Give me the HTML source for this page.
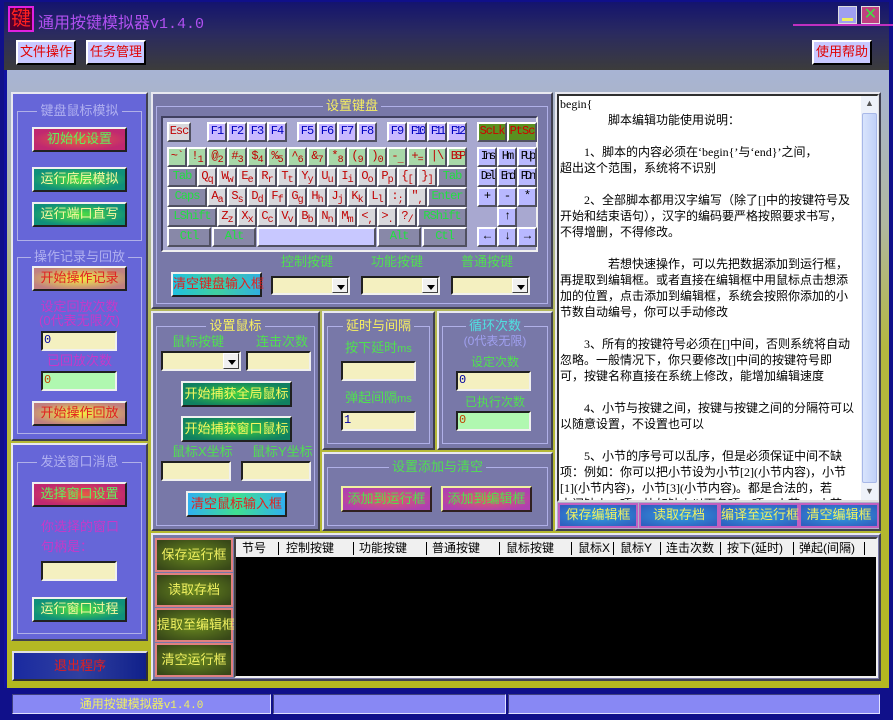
<!DOCTYPE html>
<html><head><meta charset="utf-8">
<style>
*{margin:0;padding:0;box-sizing:border-box}
body{width:893px;height:720px;overflow:hidden;background:#10108a;font-family:"Liberation Sans","Noto Sans CJK SC","WenQuanYi Zen Hei",sans-serif;font-size:13px;position:relative}
.a{position:absolute}
.c{text-align:center;white-space:nowrap}
.panel{position:absolute;border:2px solid;border-color:#e8e8f0 #404050 #404050 #e8e8f0}
.grp{position:absolute;border:1px solid #b0b0e8}
.lg{position:absolute;left:0;right:0;top:-9px;text-align:center;font-size:13px;line-height:16px}
.lg span{padding:0 3px}
.in{position:absolute;background:#f4f0c0;border:2px solid;border-color:#202020 #f0f0f0 #f0f0f0 #202020;font-size:12px;line-height:15px;padding-left:1px;font-family:"Liberation Mono",monospace}
.btn{position:absolute;border:2px solid;border-color:#f0f0f0 #202020 #202020 #f0f0f0;text-align:center;white-space:nowrap;font-size:13px}
.cb{position:absolute;background:#f4f0c0;border:2px solid;border-color:#202020 #f0f0f0 #f0f0f0 #202020}
.cb i{position:absolute;right:0;top:0;bottom:0;width:16px;background:#f0f0f0;border:1px solid;border-color:#fff #404040 #404040 #fff}
.cb i:after{content:"";position:absolute;left:4px;top:6px;border:4px solid transparent;border-top:5px solid #000;border-bottom:0}
.k{position:absolute;height:20px;border:2px solid;border-color:#fff #505060 #505060 #fff;font-family:"Liberation Mono",monospace;font-size:12px;line-height:15px;text-align:center;white-space:nowrap;overflow:hidden;letter-spacing:-1px}
.L{background:#d8d8dc;color:#c00000}
.N{background:#a8d8a8;color:#c00000}
.F{background:#c8b8ff;color:#0000c0}
.M{background:#8888a8;color:#20e040}
.P{background:#b8b8ff;color:#000}
.S{background:#5a9020;color:#d00000}
.lab{position:absolute;white-space:nowrap;font-size:13px;line-height:16px}
.g{color:#50e050}
.y{color:#f8f060}
sub{font-size:10px;vertical-align:-3px}
</style></head><body>
<div class="a" style="left:4px;top:2px;width:885px;height:68px;background:linear-gradient(#14146e,#2a2a60 45%,#3c3c3c)"></div>
<div class="a c" style="left:8px;top:6px;width:26px;height:26px;border:2px solid #e020e0;background:#500030;color:#ff2020;font-size:20px;line-height:22px">键</div>
<div class="a" style="left:38px;top:9px;color:#b050f0;font-size:16px;white-space:nowrap">通用按键模拟器<span style="font-family:'Liberation Mono',monospace;font-size:15px">v1.4.0</span></div>
<div class="a" style="left:793px;top:24px;width:100px;height:2px;background:#c030c0"></div>
<div class="a" style="left:838px;top:6px;width:19px;height:18px;background:#a0a0f0;border:1px solid #ddd"><div class="a" style="left:3px;top:11px;width:11px;height:3px;background:#f0f060"></div></div>
<div class="a c" style="left:861px;top:6px;width:19px;height:18px;background:#c04080;border:1px solid #ddd;color:#40e040;font-size:16px;line-height:15px">✕</div>
<div class="btn" style="left:16px;top:40px;width:60px;height:25px;background:#c8c8ff;color:#e00000;line-height:20px;border-color:#fff #000 #000 #fff">文件操作</div>
<div class="btn" style="left:86px;top:40px;width:60px;height:25px;background:#c8c8ff;color:#e00000;line-height:20px;border-color:#fff #000 #000 #fff">任务管理</div>
<div class="btn" style="left:812px;top:40px;width:60px;height:25px;background:#c8c8ff;color:#e00000;line-height:20px;border-color:#fff #000 #000 #fff">使用帮助</div>
<div class="a" style="left:4px;top:70px;width:885px;height:618px;background:linear-gradient(#a8b4d4 0%,#b0b8a0 25%,#b4b840 45%,#b4b820 100%);border-left:3px solid #1010a0"></div>
<div class="panel" style="left:11px;top:92px;width:137px;height:349px;background:#6666d8"></div>
<div class="grp" style="left:17px;top:111px;width:125px;height:130px"><div class="lg" style="color:#b0b0f0"><span style="background:#6666d8">键盘鼠标模拟</span></div></div>
<div class="btn" style="left:32px;top:127px;width:95px;height:25px;background:radial-gradient(ellipse at center,#e86040,#c02870 75%);color:#60f060;line-height:20px">初始化设置</div>
<div class="btn" style="left:32px;top:167px;width:95px;height:25px;background:radial-gradient(ellipse at center,#50e040,#10907a 75%);color:#f8f8a0;line-height:20px">运行底层模拟</div>
<div class="btn" style="left:32px;top:202px;width:95px;height:25px;background:radial-gradient(ellipse at center,#50e040,#10907a 75%);color:#f8f8a0;line-height:20px">运行端口直写</div>
<div class="grp" style="left:17px;top:257px;width:125px;height:177px"><div class="lg" style="color:#b0b0f0"><span style="background:#6666d8">操作记录与回放</span></div></div>
<div class="btn" style="left:32px;top:266px;width:95px;height:25px;background:radial-gradient(ellipse at center,#f8f040,#c08080 80%);color:#e02020;line-height:20px">开始操作记录</div>
<div class="lab c" style="left:17px;width:125px;top:299px;color:#c838c8">设定回放次数</div>
<div class="lab c" style="left:17px;width:125px;top:313px;color:#c838c8">(0代表无限次)</div>
<div class="in" style="left:41px;top:331px;width:76px;height:20px;color:#0000a0">0</div>
<div class="lab c" style="left:17px;width:125px;top:353px;color:#c838c8">已回放次数</div>
<div class="in" style="left:41px;top:371px;width:76px;height:20px;background:#b0f8b0;color:#c04000">0</div>
<div class="btn" style="left:32px;top:401px;width:95px;height:25px;background:radial-gradient(ellipse at center,#f8f040,#c08080 80%);color:#e02020;line-height:20px">开始操作回放</div>
<div class="panel" style="left:11px;top:443px;width:137px;height:198px;background:#6666d8"></div>
<div class="grp" style="left:17px;top:462px;width:125px;height:172px"><div class="lg" style="color:#b0b0f0"><span style="background:#6666d8">发送窗口消息</span></div></div>
<div class="btn" style="left:32px;top:482px;width:95px;height:25px;background:radial-gradient(ellipse at center,#e86040,#c02870 75%);color:#60f060;line-height:20px">选择窗口设置</div>
<div class="lab" style="left:41px;top:519px;color:#c838c8">你选择的窗口</div>
<div class="lab" style="left:41px;top:539px;color:#c838c8">句柄是：</div>
<div class="in" style="left:41px;top:561px;width:76px;height:20px"></div>
<div class="btn" style="left:32px;top:597px;width:95px;height:25px;background:radial-gradient(ellipse at center,#50e040,#10907a 75%);color:#f8f8a0;line-height:20px">运行窗口过程</div>
<div class="btn" style="left:12px;top:651px;width:136px;height:30px;background:linear-gradient(90deg,#1a2aa0,#3040a0 50%,#10208a);color:#e02020;line-height:25px;border-color:#e0e0e0 #303030 #303030 #e0e0e0">退出程序</div>
<div class="panel" style="left:151px;top:92px;width:402px;height:217px;background:#7878a8"></div>
<div class="grp" style="left:156px;top:106px;width:392px;height:198px"><div class="lg y"><span style="background:#7878a8">设置键盘</span></div></div>
<div class="a" style="left:161px;top:116px;width:377px;height:136px;background:#a8a8d0;border:2px solid;border-color:#404060 #f0f0f0 #f0f0f0 #404060"></div>
<div class="k L" style="left:167px;top:122px;width:24px">Esc</div>
<div class="k F" style="left:207px;top:122px;width:20px">F1</div><div class="k F" style="left:227px;top:122px;width:20px">F2</div><div class="k F" style="left:247px;top:122px;width:20px">F3</div><div class="k F" style="left:267px;top:122px;width:20px">F4</div>
<div class="k F" style="left:297px;top:122px;width:20px">F5</div><div class="k F" style="left:317px;top:122px;width:20px">F6</div><div class="k F" style="left:337px;top:122px;width:20px">F7</div><div class="k F" style="left:357px;top:122px;width:20px">F8</div>
<div class="k F" style="left:387px;top:122px;width:20px">F9</div><div class="k F" style="left:407px;top:122px;width:20px;letter-spacing:-3px">F10</div><div class="k F" style="left:427px;top:122px;width:20px;letter-spacing:-3px">F11</div><div class="k F" style="left:447px;top:122px;width:20px;letter-spacing:-3px">F12</div>
<div class="k S" style="left:477px;top:122px;width:30px">ScLk</div><div class="k S" style="left:507px;top:122px;width:30px">PtSc</div>
<div class="k N" style="left:167px;top:147px;width:20px">~`</div>
<div class="k N" style="left:187px;top:147px;width:20px">!<sub>1</sub></div>
<div class="k N" style="left:207px;top:147px;width:20px">@<sub>2</sub></div>
<div class="k N" style="left:227px;top:147px;width:20px">#<sub>3</sub></div>
<div class="k N" style="left:247px;top:147px;width:20px">$<sub>4</sub></div>
<div class="k N" style="left:267px;top:147px;width:20px">%<sub>5</sub></div>
<div class="k N" style="left:287px;top:147px;width:20px">^<sub>6</sub></div>
<div class="k N" style="left:307px;top:147px;width:20px">&amp;<sub>7</sub></div>
<div class="k N" style="left:327px;top:147px;width:20px">*<sub>8</sub></div>
<div class="k N" style="left:347px;top:147px;width:20px">(<sub>9</sub></div>
<div class="k N" style="left:367px;top:147px;width:20px">)<sub>0</sub></div>
<div class="k N" style="left:387px;top:147px;width:20px">-<sub>_</sub></div>
<div class="k N" style="left:407px;top:147px;width:20px">+<sub>=</sub></div>
<div class="k N" style="left:427px;top:147px;width:20px">|\</div>
<div class="k N" style="left:447px;top:147px;width:20px;letter-spacing:-3px">BSP</div>
<div class="k M" style="left:167px;top:167px;width:30px">Tab</div>
<div class="k L" style="left:197px;top:167px;width:20px">Q<sub>q</sub></div><div class="k L" style="left:217px;top:167px;width:20px">W<sub>w</sub></div><div class="k L" style="left:237px;top:167px;width:20px">E<sub>e</sub></div><div class="k L" style="left:257px;top:167px;width:20px">R<sub>r</sub></div><div class="k L" style="left:277px;top:167px;width:20px">T<sub>t</sub></div><div class="k L" style="left:297px;top:167px;width:20px">Y<sub>y</sub></div><div class="k L" style="left:317px;top:167px;width:20px">U<sub>u</sub></div><div class="k L" style="left:337px;top:167px;width:20px">I<sub>i</sub></div><div class="k L" style="left:357px;top:167px;width:20px">O<sub>o</sub></div><div class="k L" style="left:377px;top:167px;width:20px">P<sub>p</sub></div><div class="k L" style="left:397px;top:167px;width:20px">{<sub>[</sub></div><div class="k L" style="left:417px;top:167px;width:20px">}<sub>]</sub></div>
<div class="k M" style="left:437px;top:167px;width:30px">Tab</div>
<div class="k M" style="left:167px;top:187px;width:40px">Caps</div>
<div class="k L" style="left:207px;top:187px;width:20px">A<sub>a</sub></div><div class="k L" style="left:227px;top:187px;width:20px">S<sub>s</sub></div><div class="k L" style="left:247px;top:187px;width:20px">D<sub>d</sub></div><div class="k L" style="left:267px;top:187px;width:20px">F<sub>f</sub></div><div class="k L" style="left:287px;top:187px;width:20px">G<sub>g</sub></div><div class="k L" style="left:307px;top:187px;width:20px">H<sub>h</sub></div><div class="k L" style="left:327px;top:187px;width:20px">J<sub>j</sub></div><div class="k L" style="left:347px;top:187px;width:20px">K<sub>k</sub></div><div class="k L" style="left:367px;top:187px;width:20px">L<sub>l</sub></div><div class="k L" style="left:387px;top:187px;width:20px">:<sub>;</sub></div><div class="k L" style="left:407px;top:187px;width:20px">"<sub>,</sub></div>
<div class="k M" style="left:427px;top:187px;width:40px">Enter</div>
<div class="k M" style="left:167px;top:207px;width:50px">LShift</div>
<div class="k L" style="left:217px;top:207px;width:20px">Z<sub>z</sub></div><div class="k L" style="left:237px;top:207px;width:20px">X<sub>x</sub></div><div class="k L" style="left:257px;top:207px;width:20px">C<sub>c</sub></div><div class="k L" style="left:277px;top:207px;width:20px">V<sub>v</sub></div><div class="k L" style="left:297px;top:207px;width:20px">B<sub>b</sub></div><div class="k L" style="left:317px;top:207px;width:20px">N<sub>n</sub></div><div class="k L" style="left:337px;top:207px;width:20px">M<sub>m</sub></div><div class="k L" style="left:357px;top:207px;width:20px">&lt;<sub>,</sub></div><div class="k L" style="left:377px;top:207px;width:20px">&gt;<sub>.</sub></div><div class="k L" style="left:397px;top:207px;width:20px">?<sub>/</sub></div>
<div class="k M" style="left:417px;top:207px;width:50px">RShift</div>
<div class="k M" style="left:167px;top:227px;width:44px">Ctl</div>
<div class="k M" style="left:212px;top:227px;width:44px">Alt</div>
<div class="k" style="left:257px;top:227px;width:119px;background:#c8c8ff"></div>
<div class="k M" style="left:377px;top:227px;width:44px">Alt</div>
<div class="k M" style="left:422px;top:227px;width:45px">Ctl</div>
<div class="k P" style="left:477px;top:147px;width:20px;letter-spacing:-3px">Ins</div><div class="k P" style="left:497px;top:147px;width:20px;letter-spacing:-2px">Hm</div><div class="k P" style="left:517px;top:147px;width:20px;letter-spacing:-3px">PUp</div>
<div class="k P" style="left:477px;top:167px;width:20px;letter-spacing:-3px">Del</div><div class="k P" style="left:497px;top:167px;width:20px;letter-spacing:-3px">End</div><div class="k P" style="left:517px;top:167px;width:20px;letter-spacing:-3px">PDn</div>
<div class="k P" style="left:477px;top:187px;width:20px">+</div><div class="k P" style="left:497px;top:187px;width:20px">-</div><div class="k P" style="left:517px;top:187px;width:20px">*</div>
<div class="k P" style="left:497px;top:207px;width:20px">↑</div>
<div class="k P" style="left:477px;top:227px;width:20px">←</div><div class="k P" style="left:497px;top:227px;width:20px">↓</div><div class="k P" style="left:517px;top:227px;width:20px">→</div>
<div class="lab g" style="left:281px;top:254px">控制按键</div>
<div class="lab g" style="left:371px;top:254px">功能按键</div>
<div class="lab g" style="left:461px;top:254px">普通按键</div>
<div class="btn" style="left:171px;top:272px;width:91px;height:25px;background:linear-gradient(90deg,#20c0e0,#40d0a0 50%,#30b0e0);color:#e02020;line-height:20px">清空键盘输入框</div>
<div class="cb" style="left:271px;top:276px;width:79px;height:19px"><i></i></div>
<div class="cb" style="left:361px;top:276px;width:79px;height:19px"><i></i></div>
<div class="cb" style="left:451px;top:276px;width:79px;height:19px"><i></i></div>
<div class="panel" style="left:151px;top:311px;width:169px;height:220px;background:#7878a8"></div>
<div class="grp" style="left:156px;top:326px;width:159px;height:200px"><div class="lg y"><span style="background:#7878a8">设置鼠标</span></div></div>
<div class="lab g" style="left:172px;top:334px">鼠标按键</div>
<div class="lab g" style="left:256px;top:334px">连击次数</div>
<div class="cb" style="left:161px;top:351px;width:80px;height:20px"><i></i></div>
<div class="in" style="left:246px;top:351px;width:65px;height:20px"></div>
<div class="btn" style="left:181px;top:381px;width:111px;height:26px;background:radial-gradient(ellipse at center,#40d040,#108060 80%);color:#f8f860;line-height:21px">开始捕获全局鼠标</div>
<div class="btn" style="left:181px;top:416px;width:111px;height:26px;background:radial-gradient(ellipse at center,#40d040,#108060 80%);color:#f8f860;line-height:21px">开始捕获窗口鼠标</div>
<div class="lab g" style="left:172px;top:444px">鼠标X坐标</div>
<div class="lab g" style="left:252px;top:444px">鼠标Y坐标</div>
<div class="in" style="left:161px;top:461px;width:70px;height:20px"></div>
<div class="in" style="left:241px;top:461px;width:70px;height:20px"></div>
<div class="btn" style="left:186px;top:491px;width:101px;height:26px;background:linear-gradient(90deg,#30b0f0,#40e090 50%,#30b0f0);color:#e02020;line-height:21px">清空鼠标输入框</div>
<div class="panel" style="left:322px;top:311px;width:113px;height:139px;background:#7878a8"></div>
<div class="grp" style="left:327px;top:326px;width:103px;height:118px"><div class="lg y"><span style="background:#7878a8">延时与间隔</span></div></div>
<div class="lab g c" style="left:327px;width:103px;top:340px">按下延时<span style="font-size:11px">ms</span></div>
<div class="in" style="left:341px;top:361px;width:75px;height:20px"></div>
<div class="lab g c" style="left:327px;width:103px;top:390px">弹起间隔<span style="font-size:11px">ms</span></div>
<div class="in" style="left:341px;top:411px;width:75px;height:20px;color:#0000a0">1</div>
<div class="panel" style="left:437px;top:311px;width:116px;height:139px;background:#7878a8"></div>
<div class="grp" style="left:442px;top:326px;width:106px;height:118px"><div class="lg" style="color:#50e0e0"><span style="background:#7878a8">循环次数</span></div></div>
<div class="lab c" style="left:442px;width:106px;top:333px;color:#a0a0f0;font-size:12px">(0代表无限)</div>
<div class="lab g c" style="left:442px;width:106px;top:354px;font-size:12px">设定次数</div>
<div class="in" style="left:456px;top:371px;width:75px;height:20px;color:#0000a0">0</div>
<div class="lab g c" style="left:442px;width:106px;top:394px;font-size:12px">已执行次数</div>
<div class="in" style="left:456px;top:411px;width:75px;height:20px;background:#b0f8b0;color:#c04000">0</div>
<div class="panel" style="left:322px;top:452px;width:231px;height:79px;background:#7878a8"></div>
<div class="grp" style="left:327px;top:467px;width:221px;height:59px"><div class="lg g"><span style="background:#7878a8">设置添加与清空</span></div></div>
<div class="btn" style="left:341px;top:486px;width:91px;height:26px;background:radial-gradient(ellipse at center,#e06060,#b040b0 80%);color:#50e050;line-height:21px;border-color:#f0f0a0 #302020 #302020 #f0f0a0">添加到运行框</div>
<div class="btn" style="left:441px;top:486px;width:91px;height:26px;background:radial-gradient(ellipse at center,#e06060,#b040b0 80%);color:#50e050;line-height:21px;border-color:#f0f0a0 #302020 #302020 #f0f0a0">添加到编辑框</div>
<div class="panel" style="left:555px;top:92px;width:326px;height:439px;background:#b0b0c8"></div>
<div class="a" style="left:557px;top:94px;width:322px;height:408px;background:#fff;border:2px solid;border-color:#303030 #e0e0e0 #e0e0e0 #303030"></div>
<div class="a" style="left:560px;top:96px;width:300px;height:404px;overflow:hidden;font-size:12px;line-height:16px;color:#000;white-space:nowrap;font-family:'Liberation Serif','Noto Sans CJK SC',sans-serif">begin{<br>　　　　脚本编辑功能使用说明：<br><br>　　1、脚本的内容必须在‘begin{’与‘end}’之间，<br>超出这个范围，系统将不识别<br><br>　　2、全部脚本都用汉字编写（除了[]中的按键符号及<br>开始和结束语句），汉字的编码要严格按照要求书写，<br>不得增删，不得修改。<br><br>　　　　若想快速操作，可以先把数据添加到运行框，<br>再提取到编辑框。或者直接在编辑框中用鼠标点击想添<br>加的位置，点击添加到编辑框，系统会按照你添加的小<br>节数自动编号，你可以手动修改<br><br>　　3、所有的按键符号必须在[]中间，否则系统将自动<br>忽略。一般情况下，你只要修改[]中间的按键符号即<br>可，按键名称直接在系统上修改，能增加编辑速度<br><br>　　4、小节与按键之间，按键与按键之间的分隔符可以<br>以随意设置，不设置也可以<br><br>　　5、小节的序号可以乱序，但是必须保证中间不缺<br>项：例如：你可以把小节设为小节[2](小节内容)，小节<br>[1](小节内容)，小节[3](小节内容)。都是合法的，若<br>中间缺少一项，比如缺少以下各项一项：小节[4](小节</div>
<div class="a" style="left:861px;top:96px;width:17px;height:404px;background:#eef2fa"></div>
<div class="a" style="left:862px;top:113px;width:15px;height:370px;background:linear-gradient(90deg,#d8e4fc,#c0d0f8);border:1px solid #a8b8e8;border-radius:2px"></div>
<div class="a c" style="left:861px;top:98px;width:17px;font-size:9px;color:#555">▲</div>
<div class="a c" style="left:861px;top:486px;width:17px;font-size:9px;color:#555">▼</div>
<div class="btn" style="left:558px;top:503px;width:80px;height:25px;background:radial-gradient(ellipse at center,#30a0e0,#3060c0 90%);color:#f0f060;line-height:19px;border-color:#c060c0">保存编辑框</div>
<div class="btn" style="left:639px;top:503px;width:80px;height:25px;background:radial-gradient(ellipse at center,#30a0e0,#3060c0 90%);color:#f0f060;line-height:19px;border-color:#c060c0">读取存档</div>
<div class="btn" style="left:719px;top:503px;width:80px;height:25px;background:radial-gradient(ellipse at center,#30a0e0,#3060c0 90%);color:#f0f060;line-height:19px;border-color:#c060c0">编译至运行框</div>
<div class="btn" style="left:799px;top:503px;width:80px;height:25px;background:radial-gradient(ellipse at center,#30a0e0,#3060c0 90%);color:#f0f060;line-height:19px;border-color:#c060c0">清空编辑框</div>
<div class="panel" style="left:151px;top:533px;width:730px;height:148px;background:#7878a8"></div>
<div class="btn" style="left:155px;top:538px;width:78px;height:34px;background:radial-gradient(ellipse at center,#6a8a20,#384818 90%);color:#f0f060;line-height:29px;border-color:#e08080">保存运行框</div>
<div class="btn" style="left:155px;top:573px;width:78px;height:34px;background:radial-gradient(ellipse at center,#6a8a20,#384818 90%);color:#f0f060;line-height:29px;border-color:#e08080">读取存档</div>
<div class="btn" style="left:155px;top:608px;width:78px;height:34px;background:radial-gradient(ellipse at center,#6a8a20,#384818 90%);color:#f0f060;line-height:29px;border-color:#e08080">提取至编辑框</div>
<div class="btn" style="left:155px;top:643px;width:78px;height:34px;background:radial-gradient(ellipse at center,#6a8a20,#384818 90%);color:#f0f060;line-height:29px;border-color:#e08080">清空运行框</div>
<div class="a" style="left:234px;top:537px;width:644px;height:141px;background:#000;border:2px solid;border-color:#404040 #f0f0f0 #f0f0f0 #404040"></div>
<div class="a" style="left:236px;top:539px;width:640px;height:19px;background:#f0f0f0;font-size:12px;line-height:19px;white-space:nowrap;color:#000;border-bottom:1px solid #000">
<span class="a" style="left:6px">节号</span><span class="a" style="left:42px;top:3px;height:13px;border-left:1px solid #000"></span>
<span class="a" style="left:50px">控制按键</span><span class="a" style="left:117px;top:3px;height:13px;border-left:1px solid #000"></span>
<span class="a" style="left:123px">功能按键</span><span class="a" style="left:190px;top:3px;height:13px;border-left:1px solid #000"></span>
<span class="a" style="left:196px">普通按键</span><span class="a" style="left:263px;top:3px;height:13px;border-left:1px solid #000"></span>
<span class="a" style="left:270px">鼠标按键</span><span class="a" style="left:335px;top:3px;height:13px;border-left:1px solid #000"></span>
<span class="a" style="left:342px">鼠标X</span><span class="a" style="left:377px;top:3px;height:13px;border-left:1px solid #000"></span>
<span class="a" style="left:384px">鼠标Y</span><span class="a" style="left:424px;top:3px;height:13px;border-left:1px solid #000"></span>
<span class="a" style="left:430px">连击次数</span><span class="a" style="left:484px;top:3px;height:13px;border-left:1px solid #000"></span>
<span class="a" style="left:491px">按下(延时)</span><span class="a" style="left:557px;top:3px;height:13px;border-left:1px solid #000"></span>
<span class="a" style="left:563px">弹起(间隔)</span><span class="a" style="left:628px;top:3px;height:13px;border-left:1px solid #000"></span>
</div>
<div class="a" style="left:12px;top:694px;width:259px;height:20px;background:#8888f4;border:1px solid;border-color:#404080 #e0e0ff #e0e0ff #404080;color:#f0f060;font-size:12px;line-height:18px;text-align:center">通用按键模拟器<span style="font-family:'Liberation Mono',monospace;font-size:11px">v1.4.0</span></div>
<div class="a" style="left:273px;top:694px;width:233px;height:20px;background:#8888f4;border:1px solid;border-color:#404080 #e0e0ff #e0e0ff #404080"></div>
<div class="a" style="left:508px;top:694px;width:372px;height:20px;background:#8888f4;border:1px solid;border-color:#404080 #e0e0ff #e0e0ff #404080"></div>
</body></html>
